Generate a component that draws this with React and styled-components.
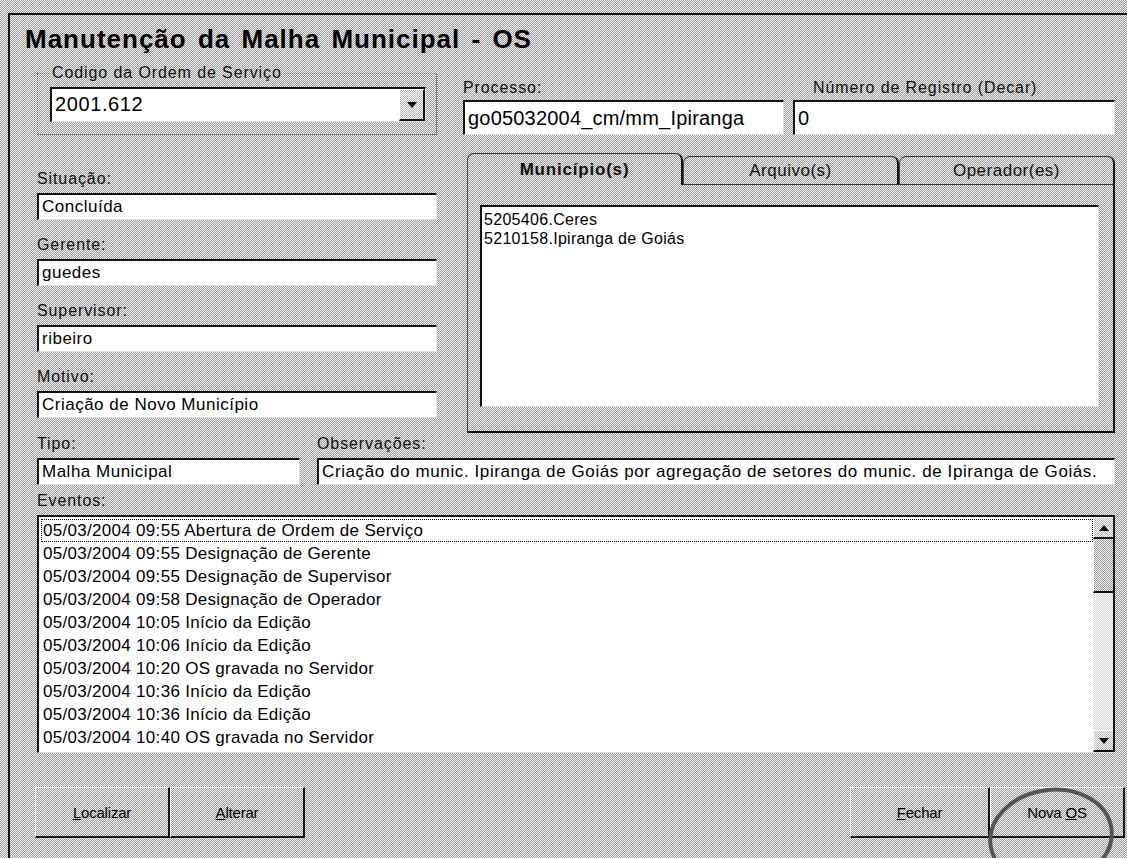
import React from "react";
import styled, { createGlobalStyle } from "styled-components";

const GlobalStyle = createGlobalStyle`
  html, body {
    margin: 0;
    padding: 0;
  }
  body {
    width: 1127px;
    height: 858px;
    overflow: hidden;
    background: repeating-conic-gradient(#9a9a9a 0 25%, #f3f3f3 0 50%) 0 0 / 2px 2px;
    font-family: "Liberation Sans", Arial, sans-serif;
    color: #000;
  }
`;

const Frame = styled.div`
  box-sizing: border-box;
  margin: 13px 0 0 8px;
  height: 845px;
  border-top: 2px solid #111;
  border-left: 2px solid #111;
  padding: 0 12px 0 27px;
  display: flex;
  flex-direction: column;
`;

const Title = styled.h1`
  margin: 9px 0 0 -12px;
  font-size: 26px;
  line-height: 30px;
  font-weight: 700;
  letter-spacing: 1px;
  word-spacing: 3px;
`;

const TopRow = styled.div`
  display: grid;
  grid-template-columns: 400px 1fr;
  column-gap: 26px;
  margin-top: 9px;
`;

const GroupBox = styled.fieldset`
  margin: 0;
  padding: 4px 10px 12px 12px;
  border: 1px dotted #666;
  box-sizing: border-box;
`;

const Legend = styled.legend`
  padding: 0 2px;
  font-size: 16px;
  line-height: 20px;
  letter-spacing: 0.9px;
  color: #111;
`;

const Combo = styled.div`
  display: flex;
  height: 35px;
  background: #fff;
  border-top: 2px solid #111;
  border-left: 2px solid #111;
  border-right: 1px solid #ddd;
  border-bottom: 1px solid #ddd;
  box-sizing: border-box;
`;

const ComboText = styled.span`
  flex: 1;
  padding: 2px 3px;
  font-size: 20px;
  line-height: 26px;
  letter-spacing: 0.6px;
`;

const ComboButton = styled.div`
  width: 26px;
  display: flex;
  align-items: center;
  justify-content: center;
  box-sizing: border-box;
  border-top: 1px solid #fff;
  border-left: 1px solid #fff;
  border-right: 2px solid #111;
  border-bottom: 2px solid #111;
  background: repeating-conic-gradient(#b8b8b8 0 25%, #fafafa 0 50%) 0 0 / 2px 2px;
`;

const ArrowDown = styled.span`
  width: 0;
  height: 0;
  border-left: 5px solid transparent;
  border-right: 5px solid transparent;
  border-top: 6px solid #000;
`;

const ArrowUp = styled.span`
  width: 0;
  height: 0;
  border-left: 5px solid transparent;
  border-right: 5px solid transparent;
  border-bottom: 6px solid #000;
`;

const FieldPair = styled.div`
  display: grid;
  grid-template-columns: 321px 1fr;
  column-gap: 9px;
  margin-top: 15px;
`;

const Field = styled.div`
  display: flex;
  flex-direction: column;
`;

const Label = styled.label`
  font-size: 16px;
  line-height: 20px;
  height: ${(p) => p.$h || 24}px;
  padding-left: ${(p) => p.$indent || 0}px;
  color: #111;
  letter-spacing: 0.9px;
`;

const TextBox = styled.div`
  box-sizing: border-box;
  height: ${(p) => p.$h || 27}px;
  background: #fff;
  border-top: 2px solid #111;
  border-left: 2px solid #111;
  border-right: 1px solid #ddd;
  border-bottom: 1px solid #ddd;
  padding: 0 3px;
  font-size: ${(p) => p.$size || 17}px;
  line-height: ${(p) => (p.$h || 27) - 3}px;
  letter-spacing: ${(p) => p.$spacing ?? 0.5}px;
  white-space: nowrap;
  overflow: hidden;
`;

const MiddleRow = styled.div`
  display: grid;
  grid-template-columns: 400px 1fr;
  column-gap: 30px;
  margin-top: 18px;
`;

const LeftFields = styled.div`
  display: flex;
  flex-direction: column;
  gap: 15px;
  padding-top: 16px;
`;

const Tabs = styled.div`
  display: flex;
  flex-direction: column;
  height: 280px;
`;

const TabStrip = styled.div`
  display: flex;
  align-items: flex-end;
  height: 32px;
`;

const Tab = styled.div`
  flex: 1;
  box-sizing: border-box;
  height: ${(p) => (p.$active ? 32 : 29)}px;
  display: flex;
  align-items: center;
  justify-content: center;
  border-top: 1px solid #333;
  border-left: 1px solid #444;
  border-right: 2px solid #111;
  border-bottom: ${(p) => (p.$active ? "none" : "1px solid #333")};
  border-radius: 7px 7px 0 0;
  font-size: 17px;
  font-weight: ${(p) => (p.$active ? 700 : 400)};
  letter-spacing: ${(p) => (p.$active ? 0.8 : 0.5)}px;
  color: #111;
`;

const TabPanel = styled.div`
  flex: 1;
  box-sizing: border-box;
  border-left: 1px solid #444;
  border-right: 2px solid #111;
  border-bottom: 2px solid #111;
  padding: 20px 14px 24px 12px;
  display: flex;
`;

const ListBox = styled.div`
  flex: 1;
  background: #fff;
  box-sizing: border-box;
  border-top: 2px solid #111;
  border-left: 2px solid #111;
  border-right: 1px solid #ddd;
  border-bottom: 1px solid #ddd;
  padding: 3px 2px;
  font-size: 16px;
  line-height: 19px;
  letter-spacing: 0.3px;
`;

const TypeRow = styled.div`
  display: grid;
  grid-template-columns: 263px 1fr;
  column-gap: 17px;
  margin-top: 1px;
`;

const EventsSection = styled.div`
  display: flex;
  flex-direction: column;
  margin-top: 6px;
`;

const EventsList = styled.div`
  display: flex;
  height: 238px;
  box-sizing: border-box;
  background: #fff;
  border-top: 2px solid #111;
  border-left: 2px solid #111;
  border-bottom: 1px solid #ddd;
`;

const EventItems = styled.ul`
  flex: 1;
  list-style: none;
  margin: 0;
  padding: 2px 0 0 2px;
  font-size: 17px;
  letter-spacing: 0.3px;
`;

const EventItem = styled.li`
  height: 23px;
  box-sizing: border-box;
  border: 1px dotted ${(p) => (p.$focused ? "#000" : "transparent")};
  padding-left: 1px;
  line-height: 21px;
`;

const ScrollBar = styled.div`
  width: 20px;
  display: flex;
  flex-direction: column;
  background: repeating-conic-gradient(#d0d0d0 0 25%, #ffffff 0 50%) 0 0 / 2px 2px;
  border-right: 2px solid #111;
`;

const ScrollButton = styled.div`
  height: 22px;
  box-sizing: border-box;
  display: flex;
  align-items: center;
  justify-content: center;
  border-top: 1px solid #fff;
  border-left: 1px solid #fff;
  border-bottom: 2px solid #111;
  background: repeating-conic-gradient(#b8b8b8 0 25%, #fafafa 0 50%) 0 0 / 2px 2px;
`;

const ScrollThumb = styled.div`
  height: 54px;
  box-sizing: border-box;
  border-left: 1px solid #fff;
  border-bottom: 2px solid #111;
  background: repeating-conic-gradient(#9a9a9a 0 25%, #f3f3f3 0 50%) 0 0 / 2px 2px;
`;

const ScrollTrack = styled.div`
  flex: 1;
`;

const ButtonRow = styled.div`
  display: flex;
  justify-content: space-between;
  margin: 34px -10px 0 -2px;
`;

const ButtonGroup = styled.div`
  display: flex;
  position: relative;
`;

const Button = styled.button`
  width: ${(p) => p.$w || 135}px;
  height: 51px;
  box-sizing: border-box;
  background: transparent;
  border-top: 1px solid #fff;
  border-left: 1px solid #fff;
  border-right: 2px solid #111;
  border-bottom: 2px solid #111;
  font-family: inherit;
  font-size: 15px;
  color: #000;
  letter-spacing: -0.2px;
  padding: 0;
`;

const Key = styled.span`
  text-decoration: underline;
`;

const Mark = styled.svg`
  position: absolute;
  right: 6px;
  top: -12px;
  pointer-events: none;
`;

const events = [
  "05/03/2004 09:55 Abertura de Ordem de Serviço",
  "05/03/2004 09:55 Designação de Gerente",
  "05/03/2004 09:55 Designação de Supervisor",
  "05/03/2004 09:58 Designação de Operador",
  "05/03/2004 10:05 Início da Edição",
  "05/03/2004 10:06 Início da Edição",
  "05/03/2004 10:20 OS gravada no Servidor",
  "05/03/2004 10:36 Início da Edição",
  "05/03/2004 10:36 Início da Edição",
  "05/03/2004 10:40 OS gravada no Servidor",
];

const people = [
  ["Situação:", "Concluída"],
  ["Gerente:", "guedes"],
  ["Supervisor:", "ribeiro"],
  ["Motivo:", "Criação de Novo Município"],
];

export default function App() {
  return (
    <>
      <GlobalStyle />
      <Frame>
        <Title>Manutenção da Malha Municipal - OS</Title>

        <TopRow>
          <GroupBox>
            <Legend>Codigo da Ordem de Serviço</Legend>
            <Combo>
              <ComboText>2001.612</ComboText>
              <ComboButton>
                <ArrowDown />
              </ComboButton>
            </Combo>
          </GroupBox>
          <FieldPair>
            <Field>
              <Label $h={22}>Processo:</Label>
              <TextBox $h={35} $size={20} $spacing={0.2}>
                go05032004_cm/mm_Ipiranga
              </TextBox>
            </Field>
            <Field>
              <Label $h={22} $indent={20}>Número de Registro (Decar)</Label>
              <TextBox $h={35} $size={20} $spacing={0.2}>
                0
              </TextBox>
            </Field>
          </FieldPair>
        </TopRow>

        <MiddleRow>
          <LeftFields>
            {people.map(([label, value]) => (
              <Field key={label}>
                <Label>{label}</Label>
                <TextBox>{value}</TextBox>
              </Field>
            ))}
          </LeftFields>
          <Tabs>
            <TabStrip>
              <Tab $active>Município(s)</Tab>
              <Tab>Arquivo(s)</Tab>
              <Tab>Operador(es)</Tab>
            </TabStrip>
            <TabPanel>
              <ListBox>
                <div>5205406.Ceres</div>
                <div>5210158.Ipiranga de Goiás</div>
              </ListBox>
            </TabPanel>
          </Tabs>
        </MiddleRow>

        <TypeRow>
          <Field>
            <Label>Tipo:</Label>
            <TextBox>Malha Municipal</TextBox>
          </Field>
          <Field>
            <Label>Observações:</Label>
            <TextBox $spacing={0.6}>
              Criação do munic. Ipiranga de Goiás por agregação de setores do munic. de Ipiranga de Goiás.
            </TextBox>
          </Field>
        </TypeRow>

        <EventsSection>
          <Label>Eventos:</Label>
          <EventsList>
            <EventItems>
              {events.map((text, i) => (
                <EventItem key={i} $focused={i === 0}>
                  {text}
                </EventItem>
              ))}
            </EventItems>
            <ScrollBar>
              <ScrollButton>
                <ArrowUp />
              </ScrollButton>
              <ScrollThumb />
              <ScrollTrack />
              <ScrollButton>
                <ArrowDown />
              </ScrollButton>
            </ScrollBar>
          </EventsList>
        </EventsSection>

        <ButtonRow>
          <ButtonGroup>
            <Button>
              <Key>L</Key>ocalizar
            </Button>
            <Button>
              <Key>A</Key>lterar
            </Button>
          </ButtonGroup>
          <ButtonGroup>
            <Button $w={140}>
              <Key>F</Key>echar
            </Button>
            <Button $w={135}>
              Nova <Key>O</Key>S
            </Button>
            <Mark width="140" height="110" viewBox="0 0 140 110">
              <ellipse
                cx="72"
                cy="62"
                rx="61"
                ry="47"
                fill="none"
                stroke="#555"
                strokeWidth="4"
                transform="rotate(-8 72 62)"
              />
            </Mark>
          </ButtonGroup>
        </ButtonRow>
      </Frame>
    </>
  );
}
